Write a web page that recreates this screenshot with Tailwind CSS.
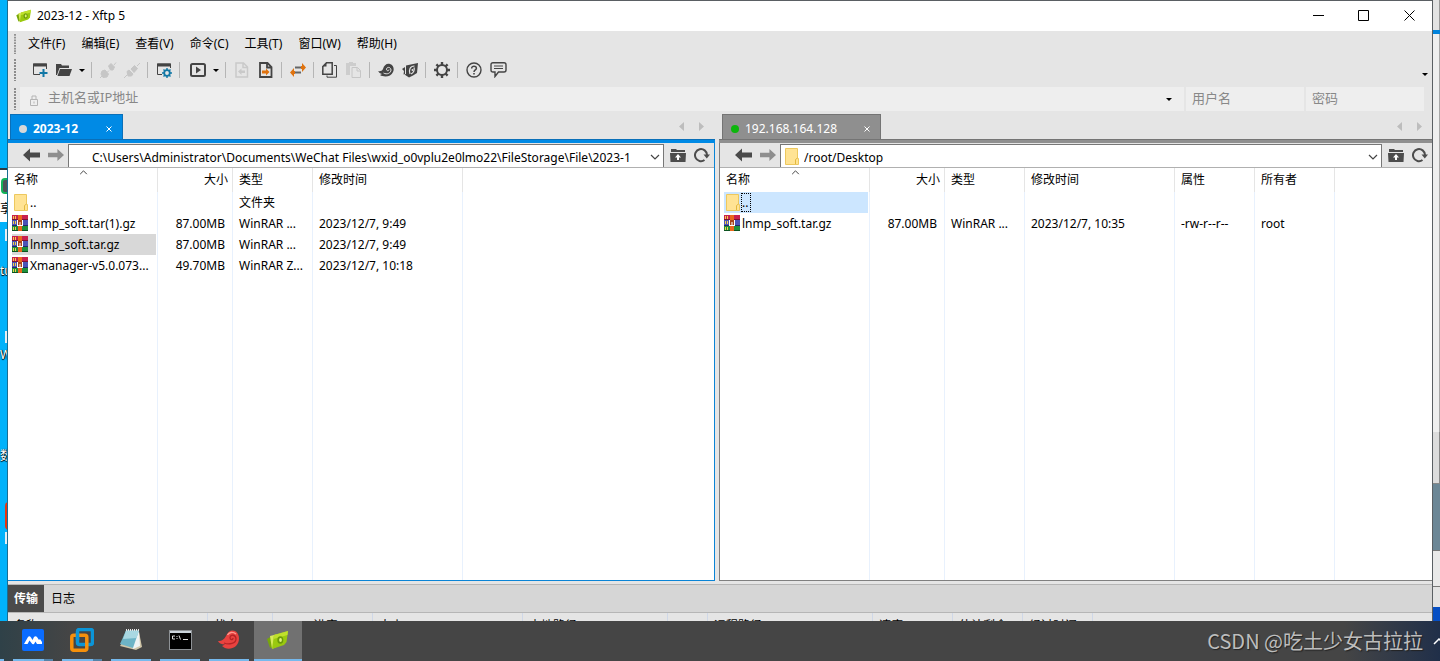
<!DOCTYPE html>
<html lang="zh-CN">
<head>
<meta charset="utf-8">
<title>2023-12 - Xftp 5</title>
<script src="https://cdn.jsdelivr.net/npm/@tailwindcss/browser@4"></script>
</head>
<body class="h-screen overflow-hidden flex flex-col bg-[#00b2fb] text-xs text-black font-['Noto_Sans','Noto_Sans_CJK_SC',sans-serif]">

<svg class="hidden" aria-hidden="true">
  <symbol id="folder" viewBox="0 0 14 17"><path d="M.5 .5H12.5V10.5H13.5V16.5H.5Z" fill="#ffe394" stroke="#edc85e"/><path d="M10.5 16V11.5L12.5 10" fill="none" stroke="#e3b93c"/></symbol>
  <symbol id="rar" viewBox="0 0 16 16">
    <rect width="16" height="5" y="0" fill="#c8204e"/><rect width="16" height="1" y="4" fill="#7b1234"/>
    <rect width="16" height="5" y="5" fill="#4a53b8"/><rect width="16" height="1" y="10" fill="#23286e"/>
    <rect width="16" height="5" y="11" fill="#1f8f3c"/><rect width="16" height="1" y="15" fill="#0c5420"/>
    <path d="M1 1h1v3H1zM3 1h1v3H3zM1 6h1v3H1zM3 6h1v3H3zM1 12h1v3H1zM3 12h1v3H3z" fill="#f3d24a"/>
    <path d="M6 0h4v16h-4z" fill="#e9671c"/><path d="M5 5h6v6H5z" fill="#a8431a"/><path d="M5.500 5V10M10.500 5V10M8 7V10M5 10.500H11" fill="none" stroke="#fff"/>
  </symbol>
  <symbol id="back" viewBox="0 0 17 14"><path d="M0 7L7 0.500V4.500H17V9.500H7V13.500Z" fill="currentColor"/></symbol>
  <symbol id="up" viewBox="0 0 16 13"><path d="M1 0H6L7 1H15V3H1ZM0 4H16L15.500 13H.5Z" fill="#4c4c4c"/><path d="M8 5L11 8.500H9V11H7V8.500H5Z" fill="#fff"/></symbol>
  <symbol id="refresh" viewBox="0 0 16 16"><path d="M10.500 13A6 6 0 1 1 13 8" fill="none" stroke="#4c4c4c" stroke-width="2"/><path d="M9.500 7.500H16L12.800 11.500Z" fill="#4c4c4c"/></symbol>
  <symbol id="caret" viewBox="0 0 6 3"><path d="M0 0H6L3 3Z" fill="#000"/></symbol>
  <symbol id="chev" viewBox="0 0 10 6"><path d="M1 1L5 5L9 1" fill="none" stroke="#444" stroke-width="1.200"/></symbol>
  <symbol id="close" viewBox="0 0 6 6"><path d="M.5 .5L5.500 5.500M5.500 .5L.5 5.500" stroke="#fff" fill="none"/></symbol>
  <symbol id="grip" viewBox="0 0 2 22"><path d="M1 0V22" stroke="#8c8c8c" stroke-width="2" stroke-dasharray="2 1"/></symbol>
  <symbol id="xftp" viewBox="0 0 22 20">
    <path d="M0 9L5 6L6 17L3 18Z" fill="#78a70a"/><path d="M3 6L11 4L13 15L5 19Z" fill="#d6ea5a"/>
    <path d="M7 5L21 1L19.500 12L17 15L5 19Z" fill="#9ac90f"/><path d="M7 5L21 1L20.500 5L6.500 9Z" fill="#bfe02c"/>
    <ellipse cx="13.300" cy="10" rx="3" ry="3.800" fill="#6a9a08"/><ellipse cx="13.500" cy="10" rx="1.400" ry="2" fill="#dff27b"/>
  </symbol>
  <symbol id="swirl" viewBox="0 0 16 16"><path d="M0 9C2 9.500 4 9 5 7C6 3 9 1 12 2C15.500 3 16.500 7 15 10C13 15 6 15.500 2 13L4 12C2 11.500 1 10.500 0 9Z" fill="currentColor"/><path d="M5.500 11C9 13 13 11 13 8C13 5 9 4.500 8.500 7C8.300 9 11 9.500 11 7.500" fill="none" stroke="#e5e5e5" stroke-width="1"/></symbol>
</svg>

<div class="flex-1 min-h-0 flex">
  <!-- desktop edge -->
  <div class="relative w-[7px] shrink-0 overflow-hidden text-white" aria-hidden="true">
    <div class="absolute inset-x-0 top-[168px] h-[54px] bg-white border-t-2 border-[#2b3a42]"></div>
    <div class="absolute left-[1px] top-[178px] w-5 h-4 rounded bg-[#4b5358] border-2 border-[#12b45a]"></div>
    <div class="absolute left-0 top-[201px] text-black leading-4">享</div>
    <div class="absolute left-[5px] top-[229px] w-2 h-3 bg-[#e8eef2]"></div>
    <div class="absolute left-0 top-[263px] leading-4 [text-shadow:0_1px_1px_#000,1px_0_1px_#000]">tu</div>
    <div class="absolute left-[5px] top-[331px] w-2 h-3 bg-[#e8eef2]"></div>
    <div class="absolute left-0 top-[347px] leading-4 [text-shadow:0_1px_1px_#000,1px_0_1px_#000]">W</div>
    <div class="absolute left-0 top-[448px] leading-4 [text-shadow:0_1px_1px_#000,1px_0_1px_#000]">数</div>
    <div class="absolute left-[5px] top-[502px] w-4 h-7 rounded-l bg-[#e8340c]"></div>
    <div class="absolute left-[5px] top-[532px] w-2 h-3 bg-[#e8eef2]"></div>
  </div>

  <!-- application window -->
  <main class="flex-1 min-w-0 flex flex-col overflow-hidden bg-[#e5e5e5] border-x border-t border-[#5a5f63] border-l-[#1a6d92]">
    <header class="h-[30px] shrink-0 bg-white flex items-center pl-2">
      <svg class="w-4 h-[14px]"><use href="#xftp"/></svg>
      <h1 class="ml-[5px]">2023-12 - Xftp 5</h1>
      <div class="ml-auto flex h-full">
        <button class="w-[45px] flex items-center justify-center pb-px" aria-label="最小化"><svg width="11" height="11"><path d="M0 5.500H11" stroke="#000"/></svg></button>
        <button class="w-[45px] flex items-center justify-center pb-px" aria-label="最大化"><svg width="11" height="11"><path d="M.5 .5H10.500V10.500H.5Z" fill="none" stroke="#000"/></svg></button>
        <button class="w-[46px] flex items-center justify-center pb-px" aria-label="关闭"><svg width="11" height="11"><path d="M.5 .5L10.500 10.500M10.500 .5L.5 10.500" stroke="#000"/></svg></button>
      </div>
    </header>

    <nav class="h-[26px] shrink-0 flex items-center gap-4 pl-1.5">
      <svg class="w-0.5 h-[20px] -mr-1"><use href="#grip"/></svg>
      <button>文件(F)</button><button>编辑(E)</button><button>查看(V)</button><button>命令(C)</button><button>工具(T)</button><button>窗口(W)</button><button>帮助(H)</button>
    </nav>

    <div class="h-[28px] shrink-0 flex items-center pb-0.5 pl-1.5 pr-1 text-[#444]">
      <svg class="w-0.5 h-[22px] mr-3"><use href="#grip"/></svg>
      <button class="w-6 h-6 grid place-items-center" aria-label="新建"><svg width="16" height="16"><path d="M8 12.500H1.500V2H14.500V7" fill="none" stroke="#444"/><path d="M1 1.500H15V4.500H1Z" fill="#444"/><path d="M11.500 7V15M7.500 11H15.500" stroke="#1177a5" stroke-width="2"/></svg></button>
      <button class="w-6 h-6 grid place-items-center" aria-label="打开"><svg width="16" height="16"><path d="M0 2H5L6 3.500H13V6H3.500L1 13H0Z" fill="#444"/><path d="M4 7H16L13.500 14H1.500Z" fill="#444"/></svg></button>
      <button class="w-3 h-6 grid place-items-center" aria-label="打开列表"><svg class="w-1.5 h-[3px]"><use href="#caret"/></svg></button>
      <span class="w-px h-4 ml-[3px] mr-1 bg-[#b5b5b5]"></span>
      <button class="w-6 h-6 grid place-items-center text-[#c6c6c6]" aria-label="重新连接" disabled><svg width="18" height="17"><path d="M1 16L3 14M3 9L6 8L9.500 12L8 15L4 15.500L2 12ZM9.500 4L12 1.500L15.500 5L14 8H11.500ZM15 3L17 .5M8.500 10L10 8.500" fill="currentColor" stroke="currentColor"/></svg></button>
      <button class="w-6 h-6 grid place-items-center text-[#c6c6c6]" aria-label="断开" disabled><svg width="18" height="17"><path d="M1 16L4 13M14 4L17 1M4 9.500L6 8L10 12L8.500 14H5ZM8 7L11.500 3.500L14.500 6.500L11 10.500Z" fill="currentColor" stroke="currentColor"/></svg></button>
      <span class="w-px h-4 ml-[3px] mr-1 bg-[#b5b5b5]"></span>
      <button class="w-6 h-6 grid place-items-center" aria-label="属性"><svg width="16" height="16"><path d="M6 12.500H1.500V2H14.500V6" fill="none" stroke="#444"/><path d="M1 1.500H15V4.500H1Z" fill="#444"/><circle cx="11" cy="11" r="2.800" fill="none" stroke="#1177a5" stroke-width="1.800"/><path d="M11 6V8M11 14V16M6 11H8M14 11H16M7.500 7.500L9 9M13 13L14.500 14.500M14.500 7.500L13 9M9 13L7.500 14.500" stroke="#1177a5" stroke-width="1.400"/></svg></button>
      <span class="w-px h-4 ml-[3px] mr-1 bg-[#b5b5b5]"></span>
      <button class="w-6 h-6 grid place-items-center ml-0.5" aria-label="执行"><svg width="16" height="14"><rect x="1" y="1" width="14" height="12" rx="1.500" fill="none" stroke="#444" stroke-width="2"/><path d="M6 3.500L11 7L6 10.500Z" fill="#444"/></svg></button>
      <button class="w-3 h-6 grid place-items-center" aria-label="执行列表"><svg class="w-1.5 h-[3px]"><use href="#caret"/></svg></button>
      <span class="w-px h-4 ml-[3px] mr-1 bg-[#b5b5b5]"></span>
      <button class="w-6 h-6 grid place-items-center" aria-label="下载" disabled><svg width="14" height="16"><path d="M1 1H8.500L12.500 5V15H1ZM8 1V5.500H12" fill="none" stroke="#c9c9c9" stroke-width="1.500"/><path d="M3 9.500L6.500 6.500V8.500H10V11H6.500V13Z" fill="#c9c9c9"/></svg></button>
      <button class="w-6 h-6 grid place-items-center" aria-label="上传"><svg width="14" height="16"><path d="M1 1H8.500L12.500 5V15H1ZM8 1V5.500H12" fill="none" stroke="#444" stroke-width="1.800"/><path d="M10.500 10L7 6.500V8.500H3V11.500H7V13.500Z" fill="#e0730f"/></svg></button>
      <span class="w-px h-4 ml-[3px] mr-1 bg-[#b5b5b5]"></span>
      <button class="w-6 h-6 grid place-items-center" aria-label="传输"><svg width="16" height="16"><path d="M5 5.500H12M4 10.500H11" stroke="#666" stroke-width="2"/><path d="M16 5.500L12 1V4H11V7H12V10ZM0 10.500L4 6V9H5V12H4V15Z" fill="#e0730f"/></svg></button>
      <span class="w-px h-4 ml-[3px] mr-1 bg-[#b5b5b5]"></span>
      <button class="w-6 h-6 grid place-items-center" aria-label="复制"><svg width="16" height="16"><path d="M4.500 .8H10.200V12.200H.8V4.500Z" fill="none" stroke="#444" stroke-width="1.500"/><path d="M.5 4.500L4.500 .5V4.500Z" fill="#444"/><path d="M12 3.500H14.500V15.200H5V13.500" fill="none" stroke="#444"/></svg></button>
      <button class="w-6 h-6 grid place-items-center" aria-label="粘贴" disabled><svg width="16" height="16"><path d="M0 1H3V0H7V1H10V4H4V13H0Z" fill="#cdcdcd"/><path d="M6 5.500H11.500L14.500 8.500V15.500H6ZM11 5.500V9H14.500" fill="none" stroke="#c6c6c6"/></svg></button>
      <span class="w-px h-4 ml-[3px] mr-1 bg-[#b5b5b5]"></span>
      <button class="w-6 h-6 grid place-items-center" aria-label="Xshell"><svg width="16" height="16"><use href="#swirl"/></svg></button>
      <button class="w-6 h-6 grid place-items-center" aria-label="Xftp"><svg width="16" height="16"><path d="M0 7L3 5V12L1.500 12.500L2 9ZM4 3.500L16 1L15 11L11 13.500L7 15.500L2.500 12.500L4 12Z" fill="#444"/><path d="M12.500 4C8 4 6.500 8 8 12M12 5.500C13 8 11.500 11 9 12" fill="none" stroke="#e5e5e5" stroke-width="1.200"/><circle cx="10.500" cy="8" r="1" fill="#e5e5e5"/></svg></button>
      <span class="w-px h-4 ml-[3px] mr-1 bg-[#b5b5b5]"></span>
      <button class="w-6 h-6 grid place-items-center" aria-label="选项"><svg width="16" height="16"><circle cx="8" cy="8" r="5" fill="none" stroke="#444" stroke-width="2"/><path d="M8 0V3M8 13V16M0 8H3M13 8H16M2.400 2.400L4.500 4.500M11.500 11.500L13.600 13.600M13.600 2.400L11.500 4.500M4.500 11.500L2.400 13.600" stroke="#444" stroke-width="2.400"/></svg></button>
      <span class="w-px h-4 ml-[3px] mr-1 bg-[#b5b5b5]"></span>
      <button class="w-6 h-6 grid place-items-center" aria-label="帮助"><svg width="16" height="16"><circle cx="8" cy="8" r="7" fill="none" stroke="#444" stroke-width="1.400"/><path d="M5.700 6.500C5.500 3.500 10.400 3.500 10.400 6.200C10.400 8 8 7.800 8 10" fill="none" stroke="#444" stroke-width="1.500"/><path d="M7.200 11H8.800V12.600H7.200Z" fill="#444"/></svg></button>
      <button class="w-6 h-6 grid place-items-center" aria-label="反馈"><svg width="17" height="16"><path d="M3 .8H14Q16 .8 16 2.800V8Q16 10 14 10H8.500L5 14.500V10H3Q1 10 1 8V2.800Q1 .8 3 .8Z" fill="none" stroke="#444" stroke-width="1.400"/><path d="M4 4H13M4 6.500H13" stroke="#444"/></svg></button>
      <button class="ml-auto self-end h-[18px] grid place-items-center" aria-label="更多"><svg class="w-1.5 h-[3px]"><use href="#caret"/></svg></button>
    </div>

    <form class="h-[29px] shrink-0 flex items-center pl-1.5 pr-2 pb-px text-[13px] text-[#888]">
      <svg class="w-0.5 h-[22px] mr-1"><use href="#grip"/></svg>
      <div class="flex-1 h-6 bg-[#eee] flex items-center pl-2.5 pr-3">
        <svg width="9" height="11" class="mt-0.5"><path d="M.5 4.500H7.500V10.500H.5ZM2 4.500V1H6V4.500M4 6.500V8.500" fill="none" stroke="#b4b4b4"/></svg>
        <input class="flex-1 ml-[9px] pb-0.5 bg-transparent outline-none placeholder:text-[#888]" placeholder="主机名或IP地址" aria-label="主机名或IP地址">
        <button type="button" aria-label="主机列表"><svg class="w-1.5 h-[3px]"><use href="#caret"/></svg></button>
      </div>
      <input class="w-[118px] h-6 ml-0.5 pb-0.5 bg-[#eee] pl-1.5 outline-none placeholder:text-[#888]" placeholder="用户名" aria-label="用户名">
      <input type="password" class="w-[118px] h-6 ml-0.5 pb-0.5 bg-[#eee] pl-1.5 outline-none placeholder:text-[#888]" placeholder="密码" aria-label="密码">
    </form>

    <div class="flex-1 min-h-0 flex gap-1">
      <!-- local pane -->
      <section class="flex-[707] min-w-0 flex flex-col">
        <div class="h-[25px] shrink-0 flex items-center pl-0.5">
          <button class="h-full w-[113px] bg-[#008ae5] border border-b-0 border-[#0a6fb8] text-white font-bold flex items-center pl-2 pr-[10px] pt-1">
            <span class="size-2 rounded-full bg-[#d8d8d8] mr-1.5"></span>2023-12<svg class="size-1.5 ml-auto"><use href="#close"/></svg>
          </button>
          <svg class="ml-auto mr-[10px]" width="27" height="9"><path d="M6 0V9L1 4.500ZM21 0V9L26 4.500Z" fill="#bdbdbd"/></svg>
        </div>
        <div class="h-1 shrink-0 bg-[#008ae5] border-t border-[#0a6fb8]"></div>
        <div class="flex-1 min-h-0 flex flex-col border-r border-b border-[#0a84d6] bg-white">
          <div class="h-[25px] shrink-0 flex items-center bg-[#e5e5e5] border-b border-[#b0b0b0]">
            <button class="ml-[15px] text-[#4a4a4a]" aria-label="后退"><svg class="w-[17px] h-[14px]"><use href="#back"/></svg></button>
            <button class="ml-2 mr-1 rotate-180 text-[#8e8e8e]" aria-label="前进"><svg class="w-[16px] h-[14px]"><use href="#back"/></svg></button>
            <div class="flex-1 self-stretch mt-px bg-white border-l border-t border-r border-[#777] flex items-center pl-[23px] pr-[3px]">
              <input class="flex-1 min-w-0 pt-1 outline-none" aria-label="本地路径" value="C:\Users\Administrator\Documents\WeChat Files\wxid_o0vplu2e0lmo22\FileStorage\File\2023-1">
              <button class="pt-0.5" aria-label="本地路径列表"><svg class="w-[10px] h-1.5"><use href="#chev"/></svg></button>
            </div>
            <button class="ml-1.5" aria-label="上级目录"><svg class="w-4 h-[13px]"><use href="#up"/></svg></button>
            <button class="ml-2 mr-1" aria-label="刷新"><svg class="size-4"><use href="#refresh"/></svg></button>
          </div>
          <div class="flex-1 min-h-0">
            <table class="w-full h-full table-fixed border-separate border-spacing-0 whitespace-nowrap">
              <colgroup><col class="w-[150px]"><col class="w-[75px]"><col class="w-[80px]"><col class="w-[150px]"><col></colgroup>
              <thead><tr class="h-6 text-left">
                <th class="relative p-0 pl-1.5 font-normal border-r border-[#e5e5e5]">名称<svg class="absolute left-[71px] top-0.5 rotate-180 w-[9px] h-[5px]"><use href="#chev"/></svg></th>
                <th class="p-0 pr-1 font-normal text-right border-r border-[#e5e5e5]">大小</th>
                <th class="p-0 pl-1.5 font-normal border-r border-[#e5e5e5]">类型</th>
                <th class="p-0 pl-1.5 font-normal border-r border-[#e5e5e5]">修改时间</th><th></th></tr></thead>
              <tbody>
                <tr class="h-[21px]"><td class="p-0 pl-1 border-r border-[#e8f1fd]"><div class="flex items-center h-[21px] pl-0.5"><svg class="w-[14px] h-[17px] mr-0.5"><use href="#folder"/></svg>..</div></td><td class="p-0 border-r border-[#e8f1fd]"></td><td class="p-0 pl-1.5 border-r border-[#e8f1fd]">文件夹</td><td class="p-0 border-r border-[#e8f1fd]"></td><td></td></tr>
                <tr class="h-[21px]"><td class="p-0 pl-1 pr-px border-r border-[#e8f1fd]"><div class="flex items-center h-[21px]"><svg class="size-4 mr-0.5 mb-0.5"><use href="#rar"/></svg>lnmp_soft.tar(1).gz</div></td><td class="p-0 pr-[7px] text-right border-r border-[#e8f1fd]">87.00MB</td><td class="p-0 pl-1.5 border-r border-[#e8f1fd]">WinRAR ...</td><td class="p-0 pl-1.5 border-r border-[#e8f1fd]">2023/12/7, 9:49</td><td></td></tr>
                <tr class="h-[21px]"><td class="p-0 pl-1 pr-px border-r border-[#e8f1fd]"><div class="flex items-center h-[21px] bg-[#d8d8d8]"><svg class="size-4 mr-0.5 mb-0.5"><use href="#rar"/></svg>lnmp_soft.tar.gz</div></td><td class="p-0 pr-[7px] text-right border-r border-[#e8f1fd]">87.00MB</td><td class="p-0 pl-1.5 border-r border-[#e8f1fd]">WinRAR ...</td><td class="p-0 pl-1.5 border-r border-[#e8f1fd]">2023/12/7, 9:49</td><td></td></tr>
                <tr class="h-[21px]"><td class="p-0 pl-1 pr-px border-r border-[#e8f1fd]"><div class="flex items-center h-[21px]"><svg class="size-4 mr-0.5 mb-0.5 shrink-0"><use href="#rar"/></svg>Xmanager-v5.0.073...</div></td><td class="p-0 pr-[7px] text-right border-r border-[#e8f1fd]">49.70MB</td><td class="p-0 pl-1.5 border-r border-[#e8f1fd]">WinRAR Z...</td><td class="p-0 pl-1.5 border-r border-[#e8f1fd]">2023/12/7, 10:18</td><td></td></tr>
                <tr><td class="border-r border-[#e8f1fd]"></td><td class="border-r border-[#e8f1fd]"></td><td class="border-r border-[#e8f1fd]"></td><td class="border-r border-[#e8f1fd]"></td><td></td></tr>
              </tbody>
            </table>
          </div>
        </div>
      </section>

      <!-- remote pane -->
      <section class="flex-[713] min-w-0 flex flex-col">
        <div class="h-[25px] shrink-0 flex items-center pl-[3px]">
          <button class="h-full w-[159px] bg-[#8f8f8f] border border-b-0 border-[#747474] text-white flex items-center pl-2 pr-[10px] pt-1">
            <span class="size-2 rounded-full bg-[#0cb60c] mr-1.5"></span>192.168.164.128<svg class="size-1.5 ml-auto"><use href="#close"/></svg>
          </button>
          <svg class="ml-auto mr-[9px]" width="27" height="9"><path d="M6 0V9L1 4.500ZM21 0V9L26 4.500Z" fill="#bdbdbd"/></svg>
        </div>
        <div class="h-1 shrink-0 bg-[#8f8f8f] border-t border-[#747474]"></div>
        <div class="flex-1 min-h-0 flex flex-col border-l border-b border-[#808080] bg-white">
          <div class="h-[25px] shrink-0 flex items-center bg-[#e5e5e5] border-b border-[#b0b0b0]">
            <button class="ml-[15px] text-[#4a4a4a]" aria-label="后退"><svg class="w-[17px] h-[14px]"><use href="#back"/></svg></button>
            <button class="ml-2 mr-1 rotate-180 text-[#8e8e8e]" aria-label="前进"><svg class="w-[16px] h-[14px]"><use href="#back"/></svg></button>
            <div class="flex-1 self-stretch mt-px bg-white border-l border-t border-r border-[#777] flex items-center pl-1 pr-[3px]">
              <svg class="w-[14px] h-[17px] mr-[5px]"><use href="#folder"/></svg>
              <input class="flex-1 min-w-0 pt-1 outline-none" aria-label="远程路径" value="/root/Desktop">
              <button class="pt-0.5" aria-label="远程路径列表"><svg class="w-[10px] h-1.5"><use href="#chev"/></svg></button>
            </div>
            <button class="ml-1.5" aria-label="上级目录"><svg class="w-4 h-[13px]"><use href="#up"/></svg></button>
            <button class="ml-2 mr-1" aria-label="刷新"><svg class="size-4"><use href="#refresh"/></svg></button>
          </div>
          <div class="flex-1 min-h-0">
            <table class="w-full h-full table-fixed border-separate border-spacing-0 whitespace-nowrap">
              <colgroup><col class="w-[150px]"><col class="w-[75px]"><col class="w-[80px]"><col class="w-[150px]"><col class="w-[80px]"><col class="w-[80px]"><col></colgroup>
              <thead><tr class="h-6 text-left">
                <th class="relative p-0 pl-1.5 font-normal border-r border-[#e5e5e5]">名称<svg class="absolute left-[71px] top-0.5 rotate-180 w-[9px] h-[5px]"><use href="#chev"/></svg></th>
                <th class="p-0 pr-1 font-normal text-right border-r border-[#e5e5e5]">大小</th>
                <th class="p-0 pl-1.5 font-normal border-r border-[#e5e5e5]">类型</th>
                <th class="p-0 pl-1.5 font-normal border-r border-[#e5e5e5]">修改时间</th>
                <th class="p-0 pl-1.5 font-normal border-r border-[#e5e5e5]">属性</th>
                <th class="p-0 pl-1.5 font-normal border-r border-[#e5e5e5]">所有者</th><th></th></tr></thead>
              <tbody>
                <tr class="h-[21px]"><td class="p-0 pl-1 pr-px border-r border-[#e8f1fd]"><div class="flex items-center h-[21px] pl-0.5 bg-[#cce6ff]"><svg class="w-[14px] h-[17px] mr-px"><use href="#folder"/></svg><span class="border border-dotted border-black w-[10px] h-[19px] leading-[17px]">..</span></div></td><td class="border-r border-[#e8f1fd]"></td><td class="border-r border-[#e8f1fd]"></td><td class="border-r border-[#e8f1fd]"></td><td class="border-r border-[#e8f1fd]"></td><td class="border-r border-[#e8f1fd]"></td><td></td></tr>
                <tr class="h-[21px]"><td class="p-0 pl-1 pr-px border-r border-[#e8f1fd]"><div class="flex items-center h-[21px]"><svg class="size-4 mr-0.5 mb-0.5"><use href="#rar"/></svg>lnmp_soft.tar.gz</div></td><td class="p-0 pr-[7px] text-right border-r border-[#e8f1fd]">87.00MB</td><td class="p-0 pl-1.5 border-r border-[#e8f1fd]">WinRAR ...</td><td class="p-0 pl-1.5 border-r border-[#e8f1fd]">2023/12/7, 10:35</td><td class="p-0 pl-1.5 border-r border-[#e8f1fd]">-rw-r--r--</td><td class="p-0 pl-1.5 border-r border-[#e8f1fd]">root</td><td></td></tr>
                <tr><td class="border-r border-[#e8f1fd]"></td><td class="border-r border-[#e8f1fd]"></td><td class="border-r border-[#e8f1fd]"></td><td class="border-r border-[#e8f1fd]"></td><td class="border-r border-[#e8f1fd]"></td><td class="border-r border-[#e8f1fd]"></td><td></td></tr>
              </tbody>
            </table>
          </div>
        </div>
      </section>
    </div>

    <!-- transfer panel, cut off by the taskbar -->
    <section class="h-10 shrink-0 pt-[3px] overflow-hidden">
      <div class="h-[29px] flex bg-[#d6d6d6] border-y border-[#b6b6b6]">
        <button class="w-9 bg-[#4b4b4b] text-white font-bold">传输</button>
        <button class="px-[7px]">日志</button>
      </div>
      <table class="table-fixed w-full border-separate border-spacing-0 whitespace-nowrap">
        <colgroup><col class="w-[200px]"><col class="w-[65px]"><col class="w-[100px]"><col class="w-[150px]"><col class="w-[145px]"><col class="w-10"><col class="w-[165px]"><col class="w-20"><col class="w-[70px]"><col class="w-[70px]"><col></colgroup>
        <thead><tr class="h-[26px] text-left *:p-0 *:pl-1.5 *:font-normal">
          <th class="border-r border-[#cfd8e8]">名称</th><th class="border-r border-[#cfd8e8]">状态</th><th class="border-r border-[#cfd8e8] text-center">进度</th><th class="border-r border-[#cfd8e8]">大小</th><th class="border-r border-[#cfd8e8]">本地路径</th><th class="border-r border-[#cfd8e8]"></th><th class="border-r border-[#cfd8e8]">远程路径</th><th class="border-r border-[#cfd8e8]">速度</th><th class="border-r border-[#cfd8e8]">估计剩余</th><th class="border-r border-[#cfd8e8]">经过时间</th><th></th>
        </tr></thead>
      </table>
    </section>
  </main>

  <!-- windows behind the right edge -->
  <div class="w-[7px] shrink-0 flex flex-col" aria-hidden="true">
    <div class="h-[30px] bg-[#e3e3e3] border-r border-[#999]"></div>
    <div class="h-1 bg-[#0083dc]"></div>
    <div class="h-[398px] bg-[#efefef] border-r border-[#a8a8a8]"></div>
    <div class="h-[52px] bg-[#dcdcdc] border-r border-b border-[#888]"></div>
    <div class="h-[66px] bg-[#6c8796]"></div>
    <div class="h-[37px] bg-[#e9e9e9] border-y border-[#777]"></div>
    <div class="h-5 bg-[#e3e3e3]"></div>
    <div class="flex-1 bg-[#064fc4]"></div>
  </div>
</div>

<footer class="h-10 shrink-0 flex items-stretch gap-px pl-[9px] bg-linear-to-r from-[#2f4148] from-0% via-[#454545] via-5% to-[#454545] relative">
  <span class="absolute left-0 bottom-0 w-1 h-0.5 bg-[#76b9ed]"></span>
  <button class="w-12 flex flex-col items-center" aria-label="腾讯会议"><span class="flex-1 grid place-items-center"><svg width="22" height="22"><rect width="22" height="22" rx="2" fill="#0a6cff"/><path d="M2 15L6 8Q7.500 6.500 9 8.500L10.500 11L12 8Q13.500 6.500 15 8L17 11L18 10L20 13V15H15L13.500 12.500L12 15Q10.500 16 9.500 14L7.500 11.500L5.500 15Z" fill="#fff"/></svg></span><span class="w-10 h-0.5 bg-[#76b9ed] border-r-9 border-[#5583a8]"></span></button>
  <button class="w-12 flex flex-col items-center" aria-label="VMware"><span class="flex-1 grid place-items-center"><svg width="24" height="24"><rect x="7.500" y="1.500" width="15" height="15" rx="2" fill="none" stroke="#0b95d8" stroke-width="3.500"/><rect x="1.800" y="7.300" width="15" height="15" rx="2" fill="none" stroke="#f6900c" stroke-width="3.500"/><path d="M7.500 12V5" stroke="#0b95d8" stroke-width="3.500"/></svg></span><span class="w-10 h-0.5 bg-[#76b9ed] border-r-9 border-[#5583a8]"></span></button>
  <button class="w-12 flex flex-col items-center" aria-label="记事本"><span class="flex-1 grid place-items-center"><svg width="24" height="24"><path d="M20 4L23 19L17 22L1 18L3 15Z" fill="#cfc5a8"/><path d="M7 3H20L21 18L14 21Z" fill="#eef3f4"/><path d="M7 2.500H20L14 20L1 16Z" fill="#6db4c6"/><path d="M7 2.500H20L17.500 10L4 11Z" fill="#a9d8e2"/><path d="M7 2H20" stroke="#e8e8e8" stroke-width="2" stroke-dasharray="1 1"/></svg></span><span class="w-10 h-0.5 bg-[#76b9ed]"></span></button>
  <button class="w-12 flex flex-col items-center" aria-label="命令提示符"><span class="flex-1 grid place-items-center"><svg width="23" height="20"><rect x=".5" y=".5" width="22" height="19" fill="#000" stroke="#8e9296"/><path d="M1 1H22V3H1Z" fill="#cdd6dd"/><path d="M6 6H3.500V9H6M8 6V7M8 8V9M10 5.500L11.500 9.500M14 9.500H19" fill="none" stroke="#ddd"/></svg></span><span class="w-10 h-0.5 bg-[#76b9ed]"></span></button>
  <button class="w-12 flex flex-col items-center" aria-label="Xshell"><span class="flex-1 grid place-items-center"><svg width="22" height="20" viewBox="0 0 22 20"><path d="M0 11C3 11.500 6 10 8 6C10 1 14 -1 18 1.500C22 5 22 12 18 16C13 20 7 19 4 16L7 14.500C3 14.500 1 13 0 11Z" fill="#e8423f"/><path d="M6 13C11 15 18 13.500 18 9C18 4.500 12.500 4 12 7.500C12 10 15 10.500 15 8" fill="none" stroke="#b52325" stroke-width="1.300"/><path d="M9.500 5C11 2 15 1.500 18 4" fill="none" stroke="#ff9a90" stroke-width="1.400"/></svg></span><span class="w-10 h-0.5 bg-[#76b9ed]"></span></button>
  <button class="w-12 flex flex-col items-center bg-[#717171]" aria-label="Xftp"><span class="flex-1 grid place-items-center"><svg class="w-[22px] h-[20px]"><use href="#xftp"/></svg></span><span class="w-full h-0.5 bg-[#76b9ed]"></span></button>
  <div class="ml-auto w-60 flex items-center justify-end bg-linear-to-r from-[#454545] from-60% to-[#202f49]">
    <span class="text-xl leading-10 text-[#bdbdbd] whitespace-nowrap [text-shadow:1px_1px_1px_#222] font-['Noto_Sans_CJK_SC',sans-serif]">CSDN @吃土少女古拉拉</span>
    <button class="ml-2.5 w-[7px] overflow-hidden" aria-label="显示隐藏的图标"><svg width="12" height="7"><path d="M1 6L6 1L11 6" fill="none" stroke="#fff" stroke-width="1.500"/></svg></button>
  </div>
</footer>
</body>
</html>
